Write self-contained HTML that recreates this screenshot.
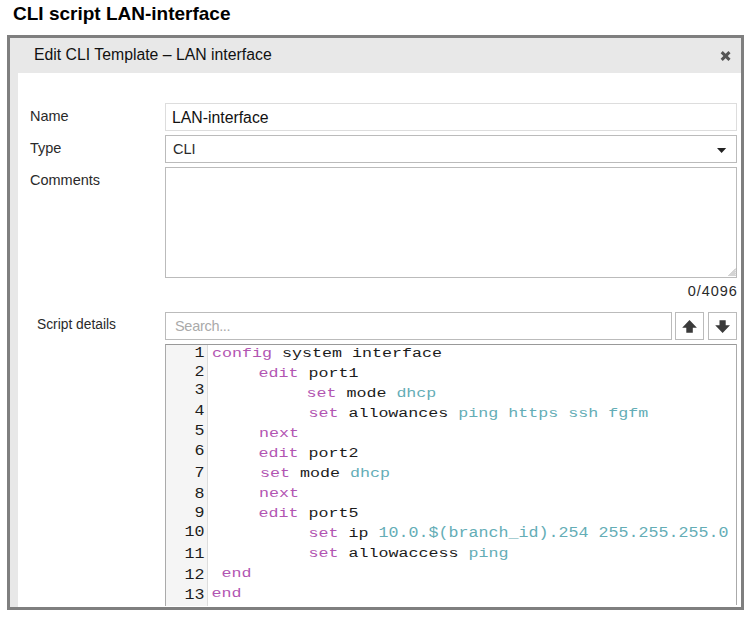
<!DOCTYPE html>
<html>
<head>
<meta charset="utf-8">
<title>CLI script LAN-interface</title>
<style>
html,body{margin:0;padding:0;background:#fff;}
body{width:751px;height:619px;position:relative;overflow:hidden;font-family:"Liberation Sans",sans-serif;color:#000;}
.abs{position:absolute;white-space:nowrap;}
#title{left:13px;top:1.5px;font-weight:bold;font-size:19px;line-height:24px;}
#dlg{left:7px;top:35px;width:731px;height:569px;border:3px solid #7f7f7f;background:#e8e8e8;}
#body{left:18px;top:73px;width:723px;height:534px;background:#fff;}
#hdr{left:34px;top:44px;font-size:15.8px;line-height:22px;color:#111;}
.lbl{font-size:14.5px;line-height:20px;color:#2a2a2a;}
.box{box-sizing:border-box;background:#fff;}
#name{left:165px;top:103px;width:572px;height:28px;border:1px solid #ddd;}
#type{left:165px;top:135px;width:572px;height:28px;border:1px solid #bbb;}
#cmt{left:165px;top:167px;width:572px;height:111px;border:1px solid #bbb;}
#search{left:165px;top:312px;width:507px;height:28px;border:1px solid #bbb;}
#up{left:675px;top:312px;width:29px;height:28px;border:1px solid #bbb;}
#down{left:708px;top:312px;width:29px;height:28px;border:1px solid #bbb;}
#ed{left:165px;top:344px;width:572px;height:262px;border:1px solid #aaa;border-top-color:#999;border-bottom:none;border-right:none;}
#edr{left:736px;top:344px;width:1px;height:261px;background:#aaa;}
#gut{left:166px;top:345px;width:41px;height:261px;background:#f5f5f5;border-right:1px solid #ddd;}
.code{font-family:"Liberation Mono",monospace;font-size:16.67px;line-height:20px;color:#000;}
.num{left:166px;width:38.5px;text-align:right;color:#1c1c1c;}
.code span{display:inline-block;transform-origin:0 14.5px;transform:scaleY(.81);}
.code span.d{transform:scaleY(.92);}
.k{color:#b255b2}.v{color:#64adb6}.t{color:#1c1c1c}
</style>
</head>
<body>
<div id="title" class="abs">CLI script LAN-interface</div>
<div id="dlg" class="abs"></div>
<div id="body" class="abs"></div>
<div id="hdr" class="abs">Edit CLI Template – LAN interface</div>
<div class="abs lbl" style="left:30px;top:106px">Name</div>
<div class="abs lbl" style="left:30px;top:138px">Type</div>
<div class="abs lbl" style="left:30px;top:170px">Comments</div>
<div id="name" class="abs box"></div>
<div id="type" class="abs box"></div>
<div id="cmt" class="abs box"></div>
<div id="search" class="abs box"></div>
<div id="up" class="abs box"></div>
<div id="down" class="abs box"></div>
<div id="ed" class="abs box"></div>
<div id="edr" class="abs"></div>
<div id="gut" class="abs"></div>
<div class="abs" style="left:172px;top:108px;font-size:15.8px;line-height:20px;color:#111">LAN-interface</div>
<div class="abs lbl" style="left:173px;top:139px;">CLI</div>
<div class="abs lbl" style="right:13.3px;top:281px;letter-spacing:0.95px">0/4096</div>
<div class="abs lbl" style="left:37px;top:314.5px;font-size:13.8px">Script details</div>
<div class="abs lbl" style="left:175px;top:316px;color:#aaa;letter-spacing:-0.3px">Search...</div>
<svg class="abs" style="left:0;top:0" width="751" height="619" viewBox="0 0 751 619">
<path d="M721.7 52.1 L729.5 59.9 M729.5 52.1 L721.7 59.9" stroke="#555" stroke-width="3" fill="none"/>
<path d="M717 148 H726.2 L721.6 153 Z" fill="#222"/>
<path d="M689.5 320 L696.9 327.8 H692.8 V332.7 H686.3 V327.8 H682.2 Z" fill="#3a3a3a"/>
<path d="M722.6 333 L715.2 325.3 H719.5 V320.3 H725.7 V325.3 H730 Z" fill="#3a3a3a"/>
<path d="M728.5 276 L736 268.5 M730.5 276 L736 270.5 M732.5 276 L736 272.5 M734.5 276 L736 274.5" stroke="#aaa" stroke-width="1" fill="none"/>
</svg>

<div class="abs code" style="left:212.0px;top:342.5px"><span class="k">config</span> <span class="t">system interface</span></div>
<div class="abs code" style="left:258.6px;top:362.5px"><span class="k">edit</span> <span class="t">port1</span></div>
<div class="abs code" style="left:306.4px;top:382.5px"><span class="k">set</span> <span class="t">mode</span> <span class="v">dhcp</span></div>
<div class="abs code" style="left:308.4px;top:402.5px"><span class="k">set</span> <span class="t">allowances</span> <span class="v">ping https ssh fgfm</span></div>
<div class="abs code" style="left:259.0px;top:422.5px"><span class="k">next</span></div>
<div class="abs code" style="left:258.6px;top:442.5px"><span class="k">edit</span> <span class="t">port2</span></div>
<div class="abs code" style="left:260.0px;top:462.5px"><span class="k">set</span> <span class="t">mode</span> <span class="v">dhcp</span></div>
<div class="abs code" style="left:259.0px;top:482.5px"><span class="k">next</span></div>
<div class="abs code" style="left:258.6px;top:502.5px"><span class="k">edit</span> <span class="t">port5</span></div>
<div class="abs code" style="left:308.6px;top:522.5px"><span class="k">set</span> <span class="t">ip</span> <span class="v d">10.0.$(branch_id).254 255.255.255.0</span></div>
<div class="abs code" style="left:308.6px;top:542.5px"><span class="k">set</span> <span class="t">allowaccess</span> <span class="v">ping</span></div>
<div class="abs code" style="left:221.6px;top:562.5px"><span class="k">end</span></div>
<div class="abs code" style="left:211.6px;top:582.5px"><span class="k">end</span></div>
<div class="abs code num" style="top:342.5px"><span class="d">1</span></div>
<div class="abs code num" style="top:361.9px"><span class="d">2</span></div>
<div class="abs code num" style="top:379.5px"><span class="d">3</span></div>
<div class="abs code num" style="top:401.1px"><span class="d">4</span></div>
<div class="abs code num" style="top:420.9px"><span class="d">5</span></div>
<div class="abs code num" style="top:440.9px"><span class="d">6</span></div>
<div class="abs code num" style="top:463.1px"><span class="d">7</span></div>
<div class="abs code num" style="top:483.9px"><span class="d">8</span></div>
<div class="abs code num" style="top:502.5px"><span class="d">9</span></div>
<div class="abs code num" style="top:521.9px"><span class="d">10</span></div>
<div class="abs code num" style="top:543.5px"><span class="d">11</span></div>
<div class="abs code num" style="top:565.1px"><span class="d">12</span></div>
<div class="abs code num" style="top:584.5px"><span class="d">13</span></div>
</body>
</html>
